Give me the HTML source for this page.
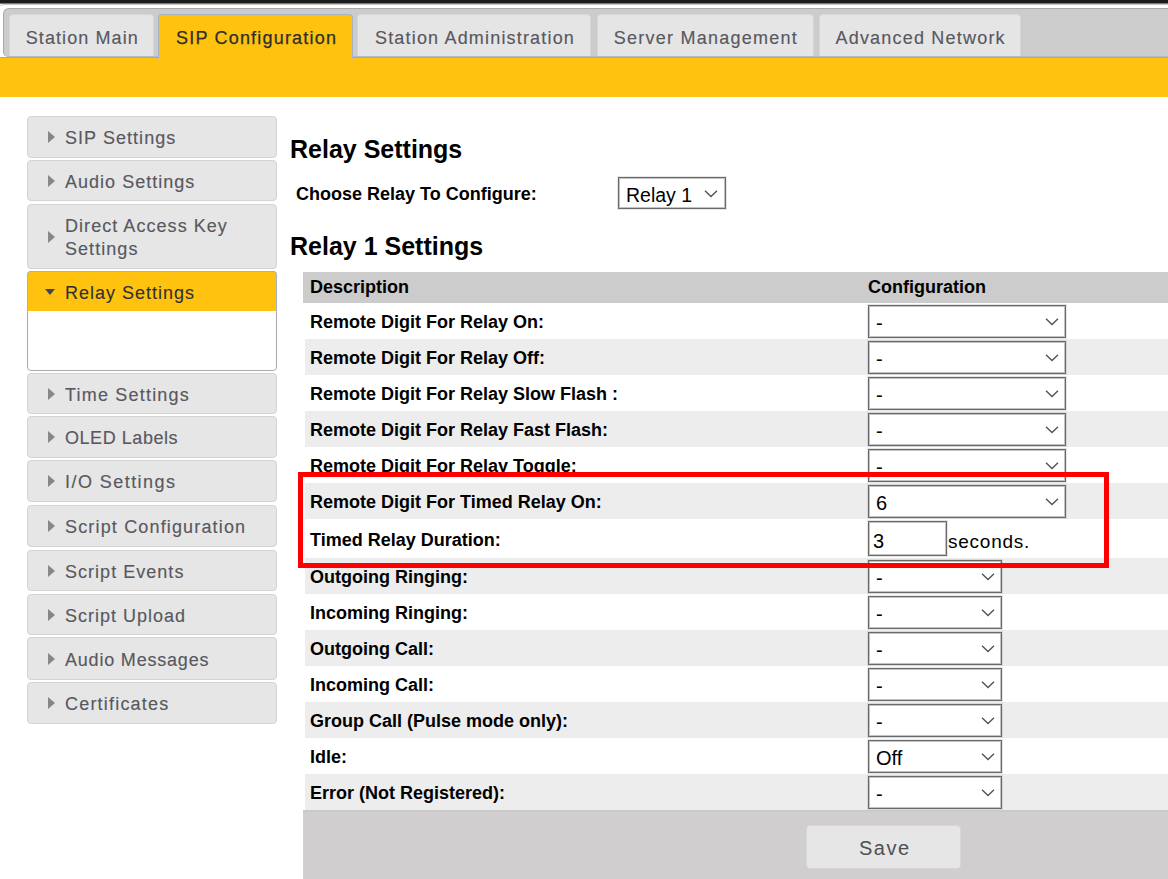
<!DOCTYPE html>
<html><head><meta charset="utf-8">
<style>
*{box-sizing:border-box;margin:0;padding:0}
html,body{width:1168px;height:879px;overflow:hidden;background:#fff;font-family:"Liberation Sans",sans-serif;position:relative}
.abs{position:absolute}
.tab{position:absolute;top:14px;height:42px;background:#e5e5e5;border:1px solid #d6d6d6;border-bottom:none;border-radius:4px 4px 0 0;color:#58585f;font-size:18px;white-space:nowrap;-webkit-text-stroke:0.15px #58585f}
.tab span{position:absolute;top:13px;line-height:20px}
.tab.act{background:#fec20f;border-color:#a9b1c4;color:#2e2e2e;-webkit-text-stroke:0.25px #2e2e2e;top:14px;height:45px;z-index:2}
.acc{position:absolute;left:27px;width:250px;height:42px;background:#e6e6e6;border:1px solid #d3d3d3;border-radius:4px;color:#58585f;font-size:18px;white-space:nowrap;-webkit-text-stroke:0.15px #58585f}
.acc span{position:absolute;left:37px;top:11px;line-height:20px}
.tri{position:absolute;left:20px;top:14px;width:0;height:0;border-top:6px solid transparent;border-bottom:6px solid transparent;border-left:7px solid #878787}
.h1{position:absolute;font-weight:bold;font-size:25px;color:#000;white-space:nowrap;line-height:28px}
.lbl{position:absolute;left:310px;font-weight:bold;font-size:18px;color:#000;white-space:nowrap;line-height:22px}
.row{position:absolute;left:305px;width:900px;height:36px;background:#ededed}
.sel{position:absolute;left:868px;height:33px;background:#fff;border:1px solid #6a6a6a;box-shadow:inset 0 0 0 1px #c2c2c2,0 0 0 1px rgba(120,120,120,0.18);font-size:20px;color:#000;white-space:nowrap}
.sel span{position:absolute;left:7px;top:5px;line-height:24px}
.sel svg{position:absolute;top:12px}
</style></head><body>
<div class="abs" style="left:0;top:0;width:1168px;height:3px;background:#1b1b1b"></div>
<div class="abs" style="left:0;top:3px;width:1168px;height:1px;background:#7a7a7a"></div>
<div class="abs" style="left:-5px;top:4px;width:1200px;height:900px;border:1px solid #c4c4c4;border-radius:9px"></div>
<div class="abs" style="left:3px;top:8px;width:1200px;height:49px;background:#cccccc;border:1px solid #a9a9a9;border-right:none;border-bottom:1px solid #b4bccb;border-radius:6px 0 0 5px"></div>
<div class="tab" style="left:9px;width:145px"><span style="left:15.7px;letter-spacing:1.1px">Station Main</span></div>
<div class="tab act" style="left:158px;width:195px"><span style="left:17.0px;letter-spacing:1.2px">SIP Configuration</span></div>
<div class="tab" style="left:357px;width:234px"><span style="left:17.0px;letter-spacing:1.18px">Station Administration</span></div>
<div class="tab" style="left:597px;width:217px"><span style="left:15.7px;letter-spacing:1.25px">Server Management</span></div>
<div class="tab" style="left:819px;width:202px"><span style="left:15.5px;letter-spacing:1.2px">Advanced Network</span></div>
<div class="abs" style="left:0;top:57px;width:1168px;height:1px;background:#bba86e"></div>
<div class="abs" style="left:0;top:58px;width:1168px;height:39px;background:#fec20f"></div>
<div class="acc" style="top:116px;height:42px"><i class="tri" style="top:14.0px"></i><span style="top:11.0px;letter-spacing:1.05px">SIP Settings</span></div>
<div class="acc" style="top:160px;height:41px"><i class="tri" style="top:13.5px"></i><span style="top:10.5px;letter-spacing:1.02px">Audio Settings</span></div>
<div class="acc" style="top:204px;height:65px"><i class="tri" style="top:26px"></i><span style="top:10px;line-height:23px;letter-spacing:1.05px">Direct Access Key<br>Settings</span></div>
<div class="acc" style="top:271px;height:100px;background:#fff;border-color:#a9a9a9"></div>
<div class="acc" style="top:271px;height:40px;background:#fec20f;border-color:#a9b1c4;border-bottom:none;border-radius:4px 4px 0 0;color:#2e2e2e"><i class="tri" style="left:17px;top:17px;border-left:5.5px solid transparent;border-right:5.5px solid transparent;border-top:6px solid #3d4656;border-bottom:none"></i><span style="letter-spacing:1px">Relay Settings</span></div>
<div class="acc" style="top:373px;height:41px"><i class="tri" style="top:13.5px"></i><span style="top:10.5px;letter-spacing:1.2px">Time Settings</span></div>
<div class="acc" style="top:416px;height:42px"><i class="tri" style="top:14.0px"></i><span style="top:11.0px;letter-spacing:0.55px">OLED Labels</span></div>
<div class="acc" style="top:460px;height:42px"><i class="tri" style="top:14.0px"></i><span style="top:11.0px;letter-spacing:1.45px">I/O Settings</span></div>
<div class="acc" style="top:505px;height:42px"><i class="tri" style="top:14.0px"></i><span style="top:11.0px;letter-spacing:1.16px">Script Configuration</span></div>
<div class="acc" style="top:550px;height:41px"><i class="tri" style="top:13.5px"></i><span style="top:10.5px;letter-spacing:1.03px">Script Events</span></div>
<div class="acc" style="top:594px;height:41px"><i class="tri" style="top:13.5px"></i><span style="top:10.5px;letter-spacing:1.0px">Script Upload</span></div>
<div class="acc" style="top:637px;height:43px"><i class="tri" style="top:14.5px"></i><span style="top:11.5px;letter-spacing:0.8px">Audio Messages</span></div>
<div class="acc" style="top:682px;height:42px"><i class="tri" style="top:14.0px"></i><span style="top:11.0px;letter-spacing:1.2px">Certificates</span></div>
<div class="h1" style="left:290px;top:135px">Relay Settings</div>
<div class="lbl" style="left:296px;top:183px">Choose Relay To Configure:</div>
<div class="sel" style="left:618px;top:177px;width:108px;height:32px;font-size:19.5px"><span style="top:5px">Relay 1</span><svg width="14" height="8" style="left:85px;top:12px"><path d="M1 0.8 L7 6.6 L13 0.8" fill="none" stroke="#555" stroke-width="1.45"/></svg></div>
<div class="h1" style="left:290px;top:232px">Relay 1 Settings</div>
<div class="abs" style="left:303px;top:272px;width:900px;height:31px;background:#cccccc"></div>
<div class="lbl" style="top:276px">Description</div>
<div class="lbl" style="left:868px;top:276px">Configuration</div>
<div class="lbl" style="top:311px">Remote Digit For Relay On:</div>
<div class="sel" style="top:305px;width:198px"><span>-</span><svg width="14" height="8" style="left:176px"><path d="M1 0.8 L7 6.6 L13 0.8" fill="none" stroke="#555" stroke-width="1.45"/></svg></div>
<div class="row" style="top:339px;height:36px"></div>
<div class="lbl" style="top:347px">Remote Digit For Relay Off:</div>
<div class="sel" style="top:341px;width:198px"><span>-</span><svg width="14" height="8" style="left:176px"><path d="M1 0.8 L7 6.6 L13 0.8" fill="none" stroke="#555" stroke-width="1.45"/></svg></div>
<div class="lbl" style="top:383px">Remote Digit For Relay Slow Flash :</div>
<div class="sel" style="top:377px;width:198px"><span>-</span><svg width="14" height="8" style="left:176px"><path d="M1 0.8 L7 6.6 L13 0.8" fill="none" stroke="#555" stroke-width="1.45"/></svg></div>
<div class="row" style="top:411px;height:36px"></div>
<div class="lbl" style="top:419px">Remote Digit For Relay Fast Flash:</div>
<div class="sel" style="top:413px;width:198px"><span>-</span><svg width="14" height="8" style="left:176px"><path d="M1 0.8 L7 6.6 L13 0.8" fill="none" stroke="#555" stroke-width="1.45"/></svg></div>
<div class="lbl" style="top:455px">Remote Digit For Relay Toggle:</div>
<div class="sel" style="top:449px;width:198px"><span>-</span><svg width="14" height="8" style="left:176px"><path d="M1 0.8 L7 6.6 L13 0.8" fill="none" stroke="#555" stroke-width="1.45"/></svg></div>
<div class="row" style="top:483px;height:36px"></div>
<div class="lbl" style="top:491px">Remote Digit For Timed Relay On:</div>
<div class="sel" style="top:485px;width:198px"><span>6</span><svg width="14" height="8" style="left:176px"><path d="M1 0.8 L7 6.6 L13 0.8" fill="none" stroke="#555" stroke-width="1.45"/></svg></div>
<div class="lbl" style="top:529px">Timed Relay Duration:</div>
<div class="sel" style="top:521px;width:79px;height:35px;font-size:20px"><span style="left:4px;top:7px">3</span></div>
<div class="abs" style="left:948px;top:531px;font-size:19px;letter-spacing:0.75px;line-height:22px;white-space:nowrap">seconds.</div>
<div class="row" style="top:558px;height:36px"></div>
<div class="lbl" style="top:566px">Outgoing Ringing:</div>
<div class="sel" style="top:560px;width:134px"><span>-</span><svg width="14" height="8" style="left:112px"><path d="M1 0.8 L7 6.6 L13 0.8" fill="none" stroke="#555" stroke-width="1.45"/></svg></div>
<div class="lbl" style="top:602px">Incoming Ringing:</div>
<div class="sel" style="top:596px;width:134px"><span>-</span><svg width="14" height="8" style="left:112px"><path d="M1 0.8 L7 6.6 L13 0.8" fill="none" stroke="#555" stroke-width="1.45"/></svg></div>
<div class="row" style="top:630px;height:36px"></div>
<div class="lbl" style="top:638px">Outgoing Call:</div>
<div class="sel" style="top:632px;width:134px"><span>-</span><svg width="14" height="8" style="left:112px"><path d="M1 0.8 L7 6.6 L13 0.8" fill="none" stroke="#555" stroke-width="1.45"/></svg></div>
<div class="lbl" style="top:674px">Incoming Call:</div>
<div class="sel" style="top:668px;width:134px"><span>-</span><svg width="14" height="8" style="left:112px"><path d="M1 0.8 L7 6.6 L13 0.8" fill="none" stroke="#555" stroke-width="1.45"/></svg></div>
<div class="row" style="top:702px;height:36px"></div>
<div class="lbl" style="top:710px">Group Call (Pulse mode only):</div>
<div class="sel" style="top:704px;width:134px"><span>-</span><svg width="14" height="8" style="left:112px"><path d="M1 0.8 L7 6.6 L13 0.8" fill="none" stroke="#555" stroke-width="1.45"/></svg></div>
<div class="lbl" style="top:746px">Idle:</div>
<div class="sel" style="top:740px;width:134px"><span>Off</span><svg width="14" height="8" style="left:112px"><path d="M1 0.8 L7 6.6 L13 0.8" fill="none" stroke="#555" stroke-width="1.45"/></svg></div>
<div class="row" style="top:774px;height:36px"></div>
<div class="lbl" style="top:782px">Error (Not Registered):</div>
<div class="sel" style="top:776px;width:134px"><span>-</span><svg width="14" height="8" style="left:112px"><path d="M1 0.8 L7 6.6 L13 0.8" fill="none" stroke="#555" stroke-width="1.45"/></svg></div>
<div class="abs" style="left:303px;top:810px;width:900px;height:100px;background:#d0cece;border-top:2px solid #c9c9c9"></div>
<div class="abs" style="left:806px;top:825px;width:155px;height:44px;background:#e6e6e6;border:1px solid #d6d6d6;border-radius:4px;color:#4f4f57;font-size:20px;letter-spacing:1.5px"><span style="position:absolute;left:52px;top:11px;line-height:22px">Save</span></div>
<div class="abs" style="left:298px;top:472px;width:811px;height:96px;border:5px solid #ff0000"></div>
</body></html>
